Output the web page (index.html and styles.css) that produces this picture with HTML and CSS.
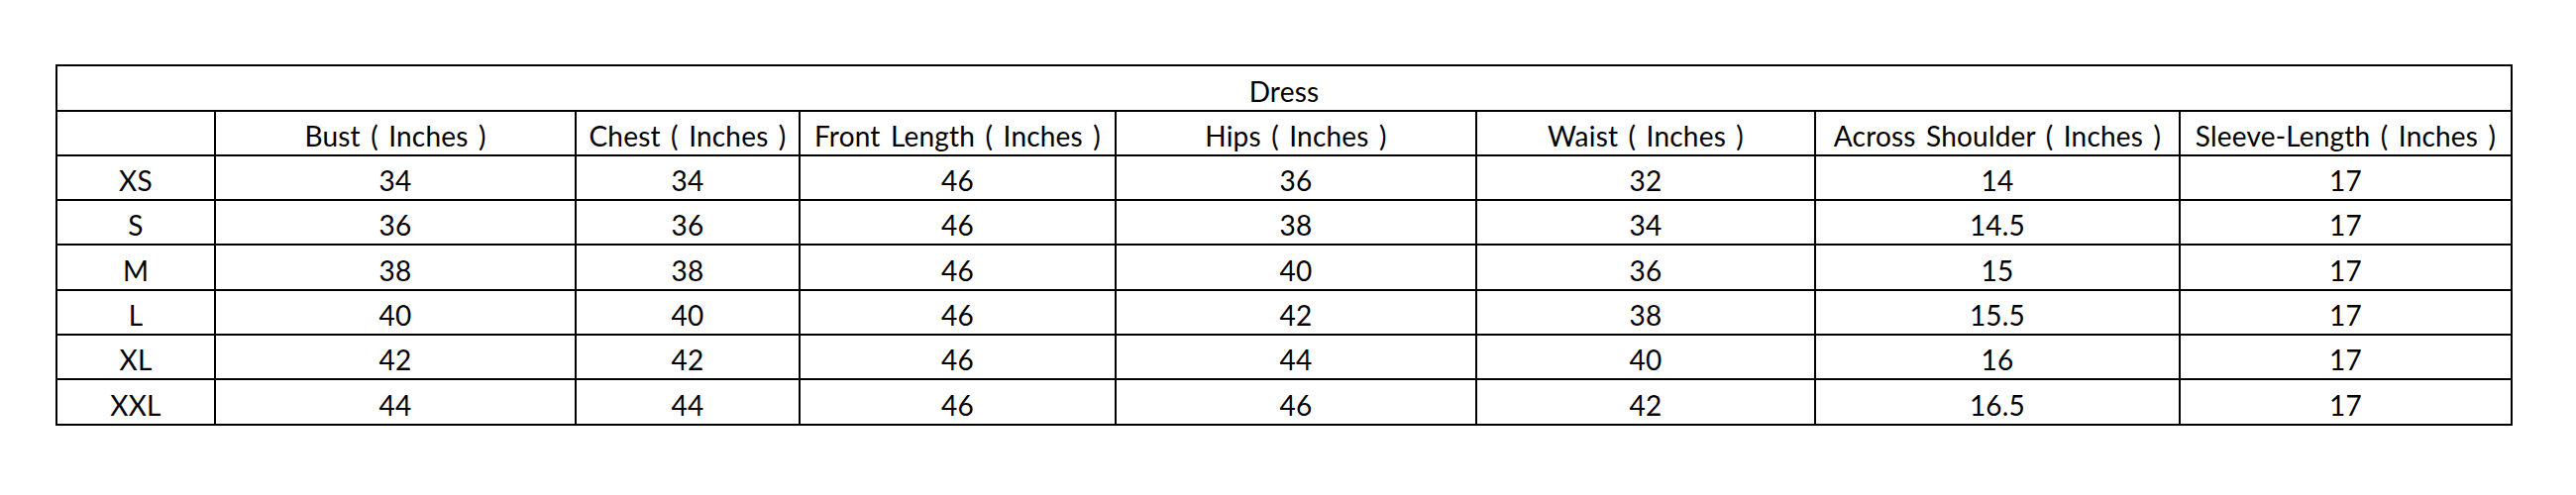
FILE: index.html
```html
<!DOCTYPE html>
<html lang="en">
<head>
<meta charset="utf-8">
<title>Dress Size Chart</title>
<link rel="stylesheet" href="styles.css">
</head>
<body>
<div class="chart">
  <div class="cell title">Dress</div>

  <div class="cell"></div>
  <div class="cell">Bust ( Inches )</div>
  <div class="cell">Chest ( Inches )</div>
  <div class="cell">Front Length ( Inches )</div>
  <div class="cell">Hips ( Inches )</div>
  <div class="cell">Waist ( Inches )</div>
  <div class="cell">Across Shoulder ( Inches )</div>
  <div class="cell">Sleeve-Length ( Inches )</div>

  <div class="cell">XS</div><div class="cell">34</div><div class="cell">34</div><div class="cell">46</div><div class="cell">36</div><div class="cell">32</div><div class="cell">14</div><div class="cell">17</div>
  <div class="cell">S</div><div class="cell">36</div><div class="cell">36</div><div class="cell">46</div><div class="cell">38</div><div class="cell">34</div><div class="cell">14.5</div><div class="cell">17</div>
  <div class="cell">M</div><div class="cell">38</div><div class="cell">38</div><div class="cell">46</div><div class="cell">40</div><div class="cell">36</div><div class="cell">15</div><div class="cell">17</div>
  <div class="cell">L</div><div class="cell">40</div><div class="cell">40</div><div class="cell">46</div><div class="cell">42</div><div class="cell">38</div><div class="cell">15.5</div><div class="cell">17</div>
  <div class="cell">XL</div><div class="cell">42</div><div class="cell">42</div><div class="cell">46</div><div class="cell">44</div><div class="cell">40</div><div class="cell">16</div><div class="cell">17</div>
  <div class="cell">XXL</div><div class="cell">44</div><div class="cell">44</div><div class="cell">46</div><div class="cell">46</div><div class="cell">42</div><div class="cell">16.5</div><div class="cell">17</div>
</div>
</body>
</html>
```

FILE: styles.css
```css
html, body {
  margin: 0;
  padding: 0;
  background: #ffffff;
}

body {
  padding: 65px 0 0 56px;
  font-family: "Lato", "Open Sans", sans-serif;
  color: #000000;
}

.chart {
  display: grid;
  width: 2480px;
  box-sizing: border-box;
  grid-template-columns: 158px 362px 224px 317px 362px 340px 366px 333px;
  grid-template-rows: 44px 43px 43px 43px 44px 43px 43px 44px;
  gap: 2px;
  padding: 2px;
  background: #000000;
}

.cell {
  background: #ffffff;
  display: flex;
  align-items: flex-end;
  justify-content: center;
  padding-bottom: 5px;
  box-sizing: border-box;
  font-size: 28px;
  line-height: 1;
  letter-spacing: 0.2px;
  word-spacing: 3px;
  white-space: nowrap;
  overflow: hidden;
}

.title {
  grid-column: 1 / -1;
}
```
